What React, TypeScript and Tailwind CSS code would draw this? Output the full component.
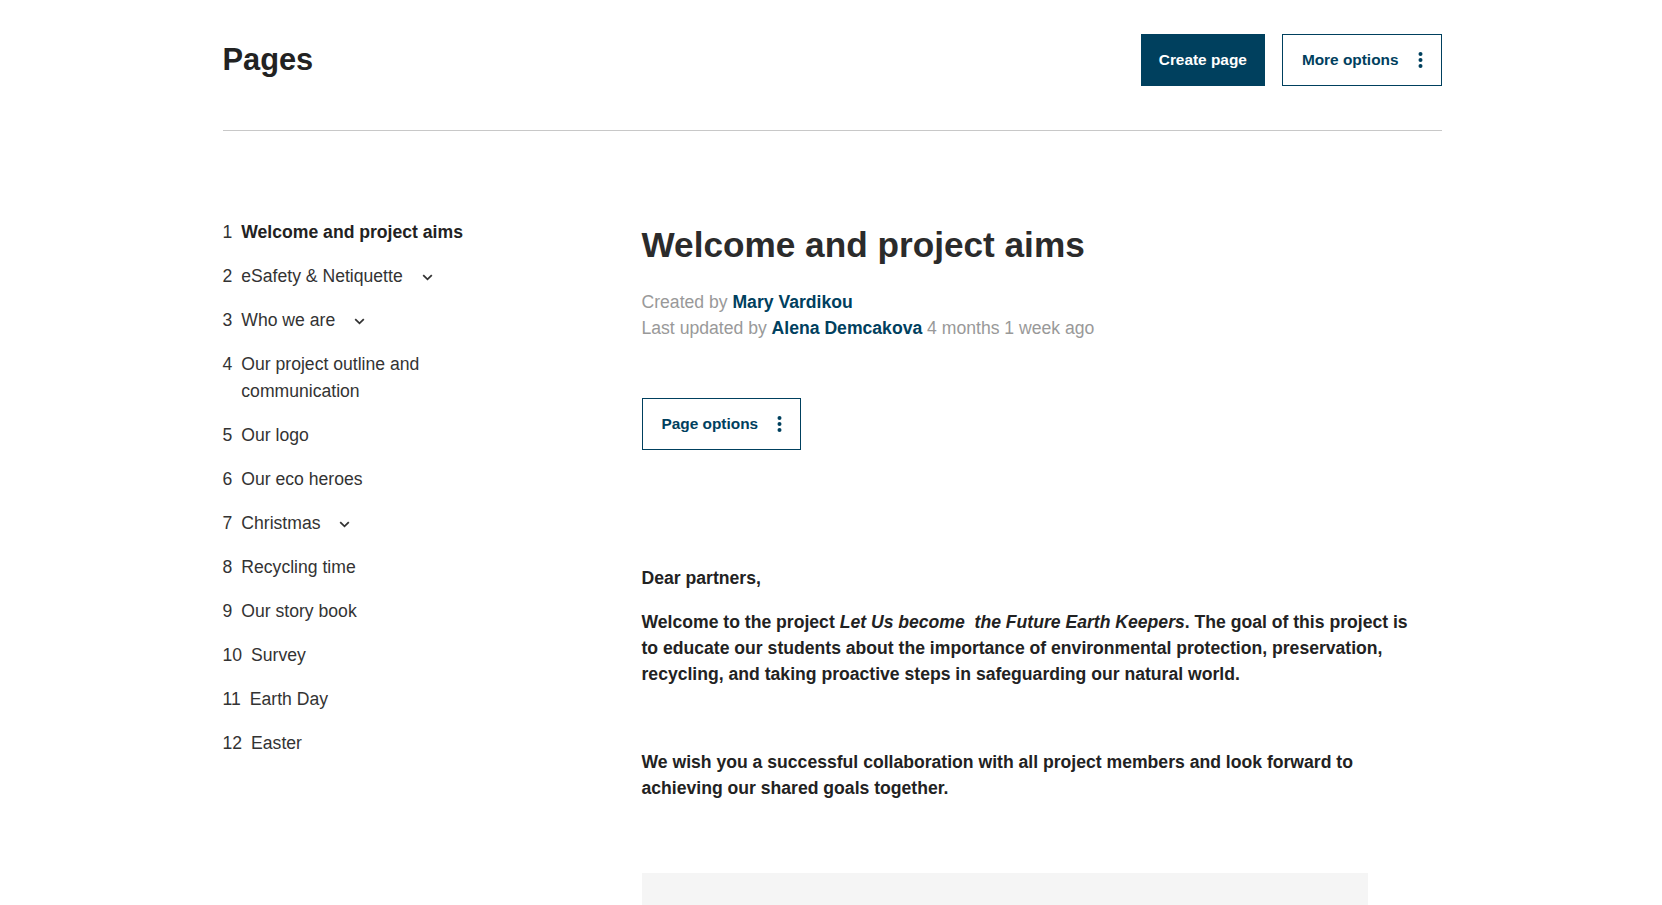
import React from "react";

const teal = "#00405e";

type NavItem = {
  num: number;
  title: string;
  active?: boolean;
  children?: boolean;
};

const navItems: NavItem[] = [
  { num: 1, title: "Welcome and project aims", active: true },
  { num: 2, title: "eSafety & Netiquette", children: true },
  { num: 3, title: "Who we are", children: true },
  { num: 4, title: "Our project outline and communication" },
  { num: 5, title: "Our logo" },
  { num: 6, title: "Our eco heroes" },
  { num: 7, title: "Christmas", children: true },
  { num: 8, title: "Recycling time" },
  { num: 9, title: "Our story book" },
  { num: 10, title: "Survey" },
  { num: 11, title: "Earth Day" },
  { num: 12, title: "Easter" },
];

function KebabIcon() {
  return (
    <svg width="5" height="16" viewBox="0 0 5 16" fill={teal} aria-hidden>
      <circle cx="2.5" cy="2" r="2" />
      <circle cx="2.5" cy="8" r="2" />
      <circle cx="2.5" cy="14" r="2" />
    </svg>
  );
}

function Chevron() {
  return (
    <svg width="11" height="7" viewBox="0 0 11 7" fill="none" aria-hidden>
      <path d="M1.2 1.2 L5.5 5.3 L9.8 1.2" stroke="#333" strokeWidth="1.8" />
    </svg>
  );
}

function OutlineButton({ label }: { label: string }) {
  return (
    <button className="flex h-[52px] items-center border border-[#00405e] bg-white pl-[19px] pr-[18px] text-[15.4px] font-bold text-[#00405e]">
      <span>{label}</span>
      <span className="ml-[19px] flex items-center">
        <KebabIcon />
      </span>
    </button>
  );
}

function PagesNav() {
  return (
    <ol className="flex w-[419px] shrink-0 flex-col gap-[17px] pt-[88px] pr-[150px] text-[17.6px] leading-[27px] text-[#333]">
      {navItems.map((item) => (
        <li key={item.num} className="flex gap-[9px]">
          <span>{item.num}</span>
          <span className="flex items-center">
            <span className={item.active ? "font-bold text-[#222]" : ""}>
              {item.title}
            </span>
            {item.children && (
              <span className="ml-[19px] flex items-center pt-[2px]">
                <Chevron />
              </span>
            )}
          </span>
        </li>
      ))}
    </ol>
  );
}

function PageContent() {
  return (
    <div className="flex-1 pt-[93px]">
      <h2 className="text-[35.2px] font-bold leading-[42px] text-[#2b2b2b]">
        Welcome and project aims
      </h2>
      <div className="mt-[23px] text-[17.6px] leading-[26px] text-[#999]">
        <p>
          Created by <span className="font-bold text-[#00405e]">Mary Vardikou</span>
        </p>
        <p>
          Last updated by{" "}
          <span className="font-bold text-[#00405e]">Alena Demcakova</span> 4 months 1 week ago
        </p>
      </div>
      <div className="mt-[57px] flex">
        <OutlineButton label="Page options" />
      </div>

      <div className="mt-[115px] flex w-[780px] flex-col gap-[18px] text-[17.6px] font-bold leading-[26px] text-[#222]">
        <p>Dear partners,</p>
        <p>
          Welcome to the project <em>Let Us become&nbsp; the Future Earth Keepers</em>. The goal of
          this project is to educate our students about the importance of environmental
          protection, preservation, recycling, and taking proactive steps in safeguarding our
          natural world.
        </p>
        <p>&nbsp;</p>
        <p>
          We wish you a successful collaboration with all project members and look forward to
          achieving our shared goals together.
        </p>
      </div>

      <div className="mt-[72px] h-[120px] w-[726px] bg-[#f5f5f5]" />
    </div>
  );
}

export default function App() {
  return (
    <div className="min-h-screen bg-white font-['Liberation_Sans',Arial,sans-serif]">
      <div className="mx-auto w-[1219px] translate-x-[1px]">
        <header className="flex items-center justify-between pt-[34px]">
          <h1 className="text-[30.8px] font-bold text-[#222]">Pages</h1>
          <div className="flex gap-[17px]">
            <button className="h-[52px] bg-[#00405e] px-[18px] text-[15.4px] font-bold text-white">
              Create page
            </button>
            <OutlineButton label="More options" />
          </div>
        </header>
        <div className="mt-[44px] border-t border-[#c8c8c8]" />

        <div className="flex">
          <PagesNav />
          <PageContent />
        </div>
      </div>
    </div>
  );
}
